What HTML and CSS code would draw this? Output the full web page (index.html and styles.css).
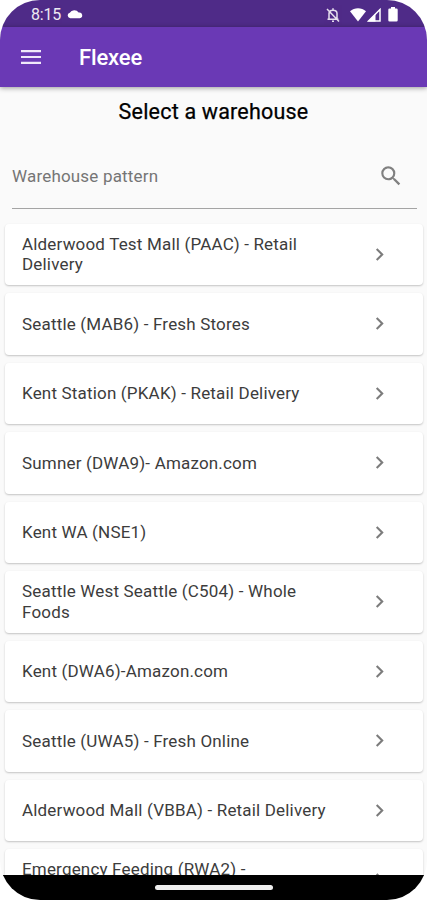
FILE: index.html
```
<!DOCTYPE html>
<html lang="en">
<head>
<meta charset="utf-8">
<title>Flexee</title>
<link rel="stylesheet" href="styles.css">
</head>
<body>
<svg class="defs" width="0" height="0"><symbol id="chev" viewBox="0 0 24 24"><path d="M10 6 8.59 7.41 13.17 12l-4.58 4.59L10 18l6-6z"/></symbol></svg>
<div class="phone">
  <div class="status">
    <span class="time">8:15</span>
    <svg class="cloud" viewBox="0 0 16 10"><path d="M3.2 9.2A2.8 2.8 0 0 1 2.8 3.7 5 4.6 0 0 1 11.6 3.5 3 2.9 0 0 1 12.8 9.2Z"/></svg>
    <span class="grow"></span>
    <svg class="bell" viewBox="0 0 14 16"><path d="M3 12V6.5C3 4.5 4.8 3.2 7 3.2s4 1.3 4 3.3V12M1.5 12.3h11M7 1.2v2M6 14.2h2M1 2l12 12.5" fill="none" stroke="#fff" stroke-width="1.5"/></svg>
    <svg class="wifi" viewBox="0 0 16 14"><path d="M0 3.2C4.5-.8 11.5-.8 16 3.2L8 13.5Z"/></svg>
    <svg class="signal" viewBox="0 0 14 14"><path d="M13 1.500V13H1.500Z" fill="none" stroke="#fff" stroke-width="1.500"/><path d="M8.500 5.500V13.500H1Z"/></svg>
    <svg class="battery" viewBox="0 0 10 15"><path d="M3 0h4v1.500h1.500q1.200 0 1.200 1.200v10.600q0 1.200-1.200 1.200h-7Q.3 14.500.3 13.300V2.700q0-1.200 1.200-1.200H3Z"/></svg>
  </div>
  <header class="bar">
    <svg class="menu" viewBox="0 0 20 14"><path d="M0 0h20v2.200H0zM0 5.900h20v2.200H0zM0 11.800h20V14H0z"/></svg>
    <h1>Flexee</h1>
  </header>
  <main>
    <h2>Select a warehouse</h2>
    <div class="search">
      <span>Warehouse pattern</span>
      <svg viewBox="0 0 24 24"><path d="M15.500 14h-.79l-.28-.27A6.470 6.470 0 0 0 16 9.500 6.500 6.500 0 1 0 9.500 16c1.610 0 3.090-.59 4.230-1.570l.27.28v.79l5 4.990L20.490 19l-4.990-5zm-6 0C7.010 14 5 11.990 5 9.500S7.010 5 9.500 5 14 7.010 14 9.500 11.990 14 9.500 14z"/></svg>
    </div>
    <ul>
      <li><span>Alderwood Test Mall (PAAC) - Retail<br>Delivery</span><svg><use href="#chev"/></svg></li>
      <li><span>Seattle (MAB6) - Fresh Stores</span><svg><use href="#chev"/></svg></li>
      <li><span>Kent Station (PKAK) - Retail Delivery</span><svg><use href="#chev"/></svg></li>
      <li><span>Sumner (DWA9)- Amazon.com</span><svg><use href="#chev"/></svg></li>
      <li><span>Kent WA (NSE1)</span><svg><use href="#chev"/></svg></li>
      <li><span>Seattle West Seattle (C504) - Whole<br>Foods</span><svg><use href="#chev"/></svg></li>
      <li><span>Kent (DWA6)-Amazon.com</span><svg><use href="#chev"/></svg></li>
      <li><span>Seattle (UWA5) - Fresh Online</span><svg><use href="#chev"/></svg></li>
      <li><span>Alderwood Mall (VBBA) - Retail Delivery</span><svg><use href="#chev"/></svg></li>
      <li><span>Emergency Feeding (RWA2) -<br>&nbsp;</span><svg><use href="#chev"/></svg></li>
    </ul>
  </main>
  <div class="nav"><i></i></div>
</div>
</body>
</html>
```
FILE: styles.css
```
* { box-sizing: border-box; margin: 0; padding: 0; }
body { background: #fff; font-family: Roboto, sans-serif; }
svg { display: block; flex: none; }
.defs { position: absolute; }
.phone { width: 427px; height: 900px; border-radius: 40px; overflow: hidden; background: #fafafa; display: flex; flex-direction: column; }
.status { height: 27px; flex: none; background: #4f2b88; display: flex; align-items: center; padding: 2px 29px 0 31px; color: #fff; fill: #fff; }
.time { font-size: 16px; letter-spacing: -.2px; line-height: 24px; padding-top: 1px; opacity: .9; }
.cloud { width: 16px; height: 10px; margin-left: 6px; margin-top: -1px; }
.grow { flex: 1; }
.bell { width: 14px; height: 16px; opacity: .85; }
.wifi { width: 16px; height: 14px; margin-left: 10px; }
.signal { width: 14px; height: 14px; margin-left: 1px; }
.battery { width: 10px; height: 15px; margin-left: 7px; }
.bar { height: 60px; flex: none; background: #6a39b5; display: flex; align-items: center; padding-left: 21px; position: relative; box-shadow: 0 1px 5px rgba(0,0,0,.4); }
.menu { width: 20px; height: 14px; fill: #f0e8fa; }
h1 { color: #fff; font-size: 22px; font-weight: 500; line-height: 28px; letter-spacing: -.15px; margin-left: 38px; padding-top: 2px; }
main { flex: 1; min-height: 0; overflow: hidden; }
h2 { font-size: 21.500px; font-weight: 400; line-height: 28px; letter-spacing: .2px; margin-top: 11px; text-align: center; color: #000; -webkit-text-stroke: .25px #000; }
.search { margin: 17px 10px 0 12px; height: 66px; border-bottom: 1px solid #a4a4a4; display: flex; justify-content: space-between; padding: 18px 13px 0 0; color: #757575; }
.search span { font-size: 17px; line-height: 30px; letter-spacing: .18px; }
.search svg { width: 26px; height: 26px; fill: #808080; margin-top: 2px; }
ul { list-style: none; display: grid; grid-auto-rows: 61.500px; gap: 8px; padding: 14.500px 4px 0 5px; }
li { display: flex; align-items: center; justify-content: space-between; background: #fff; border-radius: 4px; box-shadow: 0 1px 2px rgba(0,0,0,.22); padding: 0 31px 0 17px; font-size: 17px; line-height: 20.500px; letter-spacing: .18px; color: #3c3c3c; white-space: nowrap; }
li svg { width: 25px; height: 25px; fill: #7c7c7c; }
.nav { height: 25px; flex: none; background: #000; display: flex; justify-content: center; padding-top: 10px; }
.nav i { width: 118px; height: 5px; border-radius: 3px; background: #eee; }
```
